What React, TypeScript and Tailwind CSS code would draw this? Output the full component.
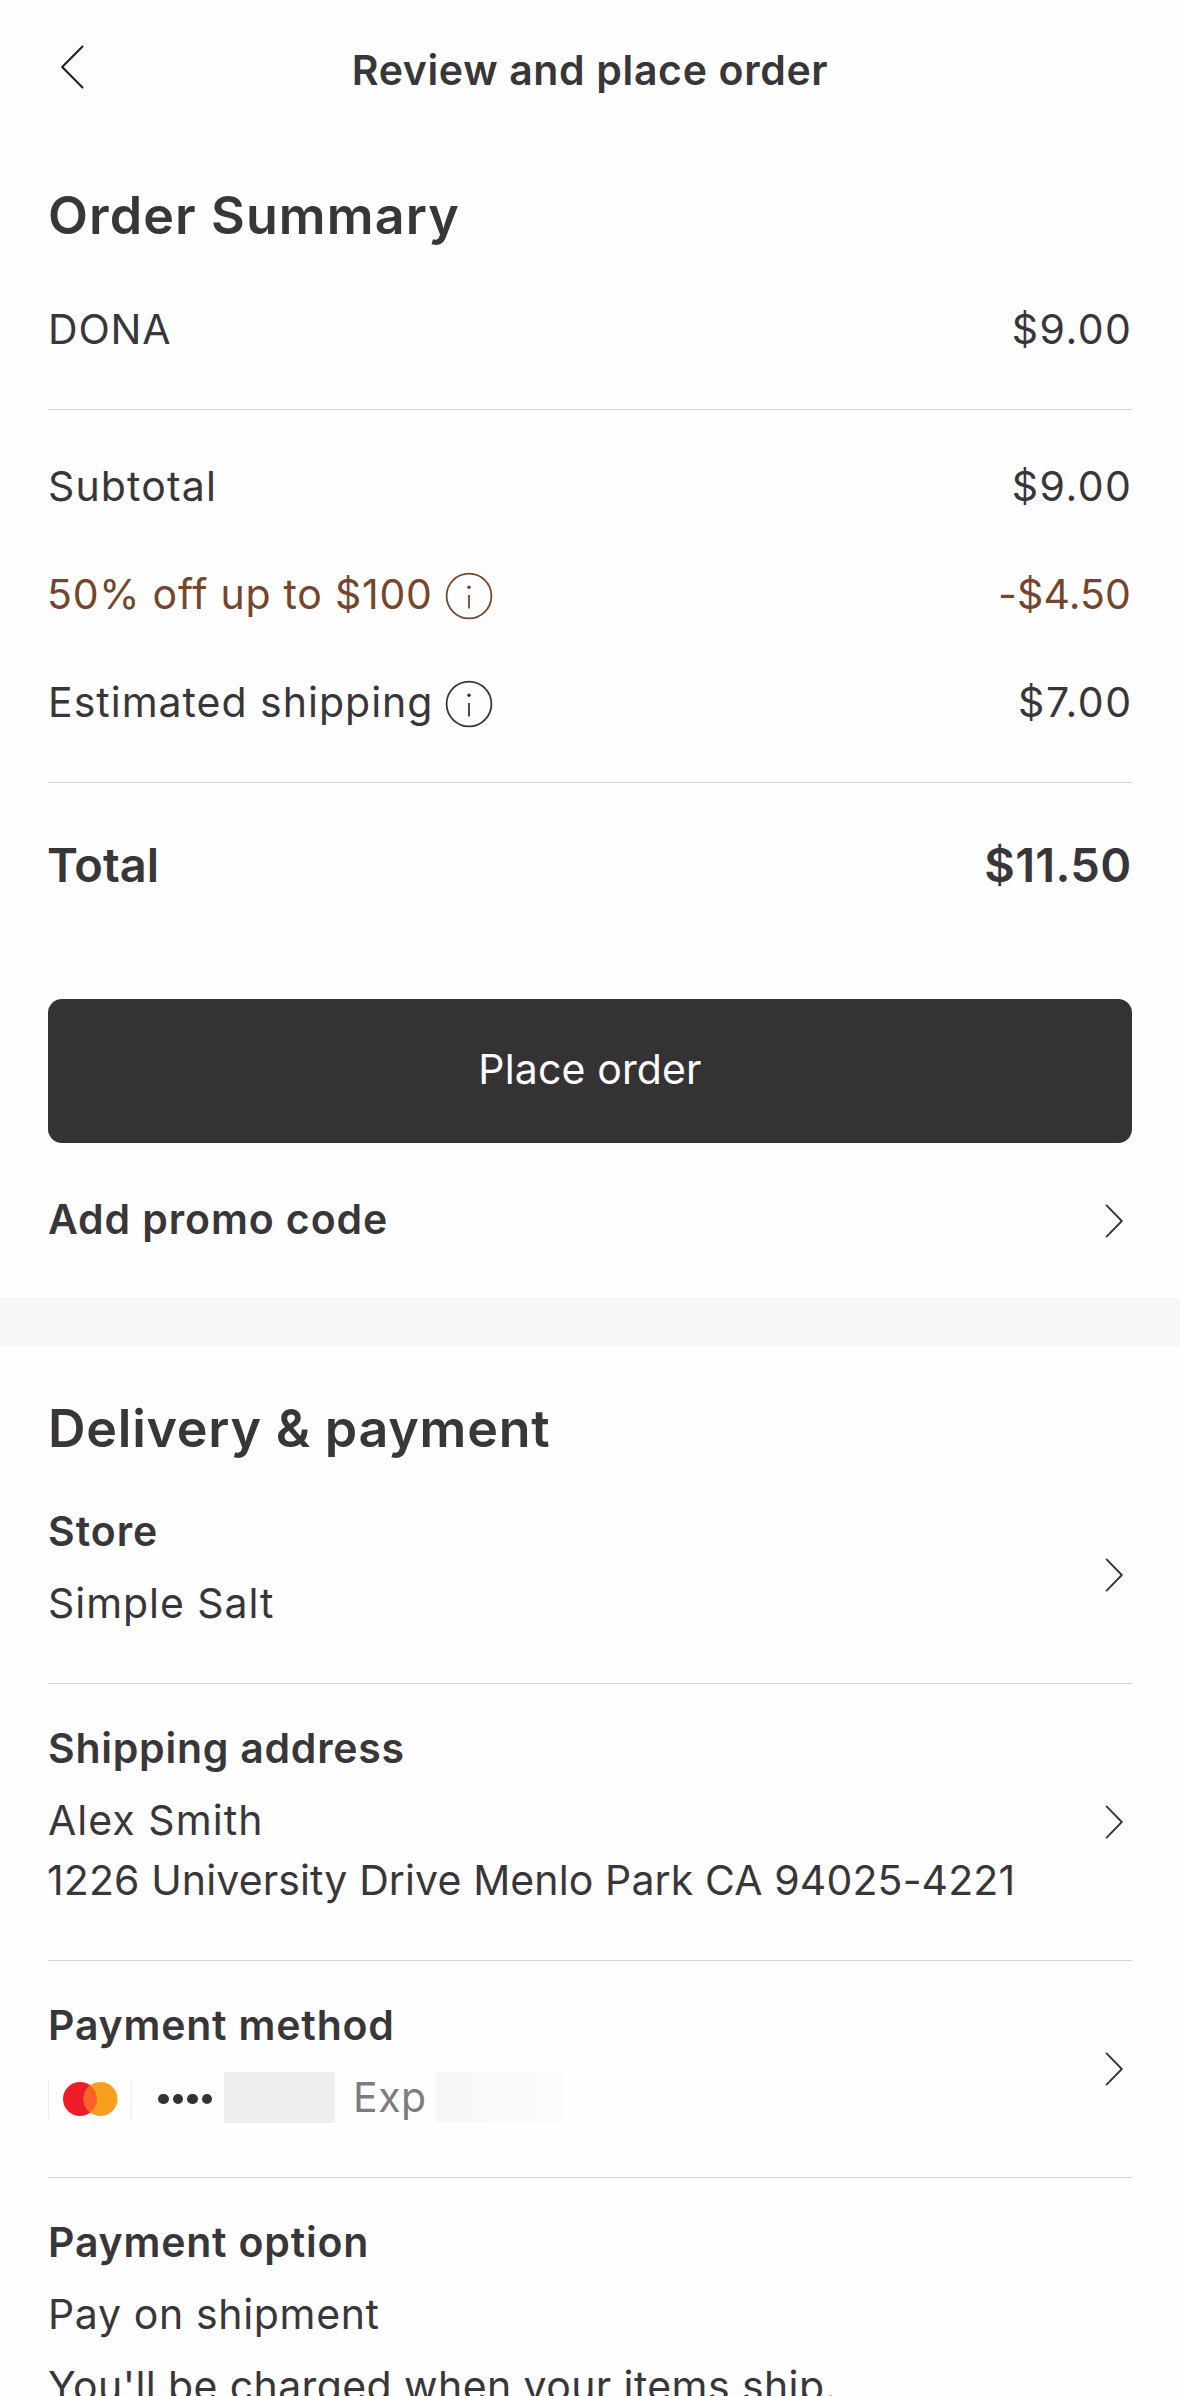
import type { ReactNode } from 'react'

function Chevron() {
  return (
    <svg className="w-[18px] h-[34px] shrink-0 mr-[9px]" viewBox="0 0 18 34" fill="none" stroke="#353235" strokeWidth="1.8" strokeLinecap="round" strokeLinejoin="round">
      <path d="M1.6 1.4 L16.8 17 L1.6 32.6" />
    </svg>
  )
}

function InfoIcon() {
  return (
    <svg className="w-[48px] h-[48px] shrink-0 mt-[2px]" viewBox="0 0 48 48" fill="none" stroke="currentColor" strokeWidth="1.8">
      <circle cx="24" cy="24" r="22.4" />
      <path d="M24 23v13.5" />
      <circle cx="24" cy="15.3" r="1.8" fill="currentColor" stroke="none" />
    </svg>
  )
}

function MastercardLogo() {
  return (
    <svg className="w-[84px] h-[60px] shrink-0" viewBox="0 0 84 60">
      <path d="M0.5 13v39M83.2 13v39" stroke="#ececec" strokeWidth="1" />
      <circle cx="32" cy="32" r="17" fill="#ed1c28" />
      <circle cx="52.5" cy="32" r="17" fill="#f99f1f" />
      {/* overlap of the two circles */}
      <path d="M42.25 18.4a17 17 0 0 1 0 27.2a17 17 0 0 1 0-27.2z" fill="#fd6127" />
    </svg>
  )
}

type SectionProps = {
  title: string
  titleClass?: string
  chevron?: boolean
  children: ReactNode
}

function Section({ title, titleClass = 'tracking-[0.75px]', chevron = true, children }: SectionProps) {
  return (
    <div className="flex items-center justify-between pt-[39px] pb-[50px] border-b border-[#d3d3d5] last:border-b-0">
      <div className="leading-[60px] whitespace-nowrap">
        <h3 className={`font-semibold leading-[50px] mb-[17px] ${titleClass}`}>{title}</h3>
        {children}
      </div>
      {chevron && (
        <div className="self-stretch flex items-center -mt-[39px] -mb-[50px]">
          <Chevron />
        </div>
      )}
    </div>
  )
}

export default function App() {
  return (
    <div className="h-[2396px] overflow-hidden bg-[#fefefe] text-[#39363a] text-[41px] font-['Inter',sans-serif]">
      <header className="h-[140px] px-[48px] grid grid-cols-[1fr_auto_1fr] items-center">
        <button aria-label="Back" className="justify-self-start ml-[12px] -mt-[6px]">
          <svg className="w-[25px] h-[44px] block" viewBox="0 0 25 44" fill="none" stroke="#222" strokeWidth="2.1" strokeLinecap="round" strokeLinejoin="round">
            <path d="M22.5 1.5 L2.2 22 L22.5 42.5" />
          </svg>
        </button>
        <h1 className="pt-[2px] font-semibold tracking-[0.65px]">Review and place order</h1>
      </header>

      <section className="px-[48px]">
        <h2 className="h-[151px] leading-[151px] text-[52px] font-semibold tracking-[1.1px]">Order Summary</h2>
        <div className="h-[119px] pt-[2px] pb-[42px] flex items-center justify-between border-b border-[#d3d3d5]">
          <span className="tracking-[0.8px]">DONA</span>
          <span className="tracking-[1.5px] -mr-[0.5px]">$9.00</span>
        </div>

        <div className="pt-[23px] pb-[25px] border-b border-[#d3d3d5]">
          <div className="h-[108px] flex items-center justify-between">
            <span className="tracking-[1.15px]">Subtotal</span>
            <span className="tracking-[1.5px] -mr-[0.5px]">$9.00</span>
          </div>
          <div className="h-[108px] flex items-center justify-between text-[#75452c]">
            <div className="flex items-center gap-[12px]">
              <span className="tracking-[0.75px] -ml-px">50% off up to $100</span>
              <InfoIcon />
            </div>
            <span className="tracking-[0.1px] mr-px">-$4.50</span>
          </div>
          <div className="h-[108px] flex items-center justify-between">
            <div className="flex items-center gap-[12px]">
              <span className="tracking-[1px]">Estimated shipping</span>
              <InfoIcon />
            </div>
            <span className="tracking-[1.5px] -mr-[0.5px]">$7.00</span>
          </div>
        </div>

        <div className="h-[164px] flex items-center justify-between text-[47px] font-semibold">
          <span className="-ml-px">Total</span>
          <span className="tracking-[0.3px] mr-[0.5px]">$11.50</span>
        </div>

        <button className="mt-[52px] w-full h-[144px] pb-[2px] rounded-[14px] bg-[#353235] text-[#fefefe] tracking-[0.14px] flex items-center justify-center">
          Place order
        </button>

        <div className="h-[155px] flex items-center justify-between">
          <span className="font-semibold tracking-[0.9px] pb-[2px]">Add promo code</span>
          <Chevron />
        </div>
      </section>

      <div className="h-[48px] bg-[#f8f6f9]" />

      <section className="px-[48px]">
        <h2 className="pt-[45px] leading-[76px] text-[52px] font-semibold tracking-[0.75px]">Delivery &amp; payment</h2>

        <Section title="Store" titleClass="tracking-[1px]">
          <p className="tracking-[0.95px]">Simple Salt</p>
        </Section>

        <Section title="Shipping address">
          <p className="tracking-[1.05px]">Alex Smith</p>
          <p className="tracking-[0.12px] -ml-px">1226 University Drive Menlo Park CA 94025-4221</p>
        </Section>

        <Section title="Payment method" titleClass="tracking-[0.8px]">
          <div className="h-[60px] flex items-center">
            <MastercardLogo />
            <div className="ml-[26px] mt-[4px] flex gap-[4px]">
              <span className="size-[10.5px] rounded-full bg-[#353235]" />
              <span className="size-[10.5px] rounded-full bg-[#353235]" />
              <span className="size-[10.5px] rounded-full bg-[#353235]" />
              <span className="size-[10.5px] rounded-full bg-[#353235]" />
            </div>
            <span className="ml-[12px] w-[111px] h-[51px] bg-[#f0efee]" />
            <span className="ml-[18px] w-[83px] text-[#7d7b7d] tracking-[0.5px]">Exp</span>
            <span className="w-[126px] h-[50px] bg-linear-to-r from-[#f7f7f7] to-[#fbfbfb]" />
          </div>
        </Section>

        <Section title="Payment option" titleClass="tracking-[0.8px]" chevron={false}>
          <p className="tracking-[0.65px]">Pay on shipment</p>
          <p className="mt-[12px] tracking-[0.4px]">You'll be charged when your items ship.</p>
        </Section>
      </section>
    </div>
  )
}
